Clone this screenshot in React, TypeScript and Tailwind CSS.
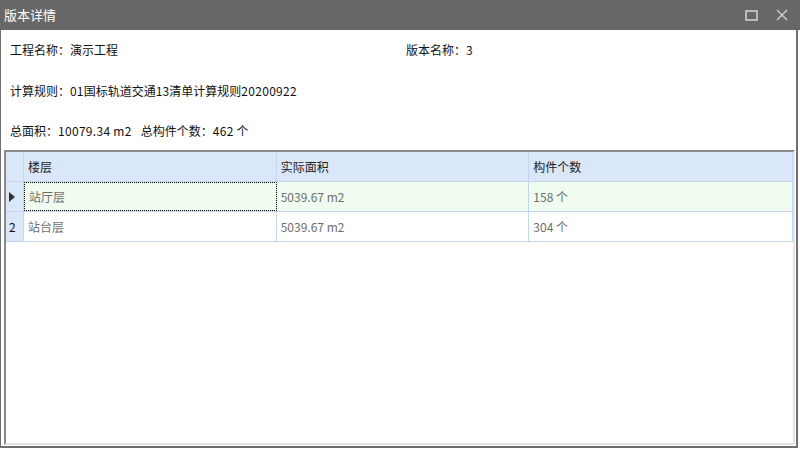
import React from "react";

const font = { fontFamily: '"Noto Sans CJK SC", "Microsoft YaHei", sans-serif' };

type Row = { no: string; floor: string; area: string; count: string };

const rows: Row[] = [
  { no: "", floor: "站厅层", area: "5039.67 m2", count: "158 个" },
  { no: "2", floor: "站台层", area: "5039.67 m2", count: "304 个" },
];

function TitleBar() {
  return (
    <div className="h-[30px] w-[800px] bg-[#676767] flex items-center justify-between">
      <span className="pl-[4px] text-[13px] text-white">版本详情</span>
      <div className="flex items-center gap-[18px] pr-[12px] text-[#d0d0d0]">
        <svg width="13" height="11" viewBox="0 0 13 11">
          <rect x="1" y="1" width="11" height="9" fill="none" stroke="currentColor" strokeWidth="1.6" />
        </svg>
        <svg width="12" height="12" viewBox="0 0 12 12">
          <path d="M1 1 L11 11 M11 1 L1 11" stroke="currentColor" strokeWidth="1.4" />
        </svg>
      </div>
    </div>
  );
}

function Grid() {
  return (
    <div className="ml-[3px] mr-[1px] flex-1 border-t-2 border-l-2 border-[#8a8a8a] border-r-2 border-r-[#e4e4e4] border-b-2 border-b-[#e4e4e4] bg-white text-[12px]">
      <div className="flex h-[30px] bg-[#dae7f9] border-b border-[#c3d6ef]">
        <div className="w-[18px] border-r border-[#c3d6ef]" />
        <div className="w-[253px] border-r border-[#c3d6ef] flex items-center pl-[4px] text-[#222]">楼层</div>
        <div className="w-[253px] border-r border-[#c3d6ef] flex items-center pl-[4px] text-[#222]">实际面积</div>
        <div className="w-[264px] border-r border-[#c3d6ef] flex items-center pl-[4px] text-[#222]">构件个数</div>
      </div>
      {rows.map((r, i) => (
        <div
          key={i}
          className={
            "flex h-[30px] border-b border-[#c3d6ef] " + (i === 0 ? "bg-[#effcef]" : "bg-white")
          }
        >
          <div className="w-[18px] bg-[#dae7f9] border-r border-[#c3d6ef] flex items-center pl-[3px] text-[#111]">
            {i === 0 ? (
              <svg width="6" height="10" viewBox="0 0 6 10">
                <path d="M0 0 L6 5 L0 10 Z" fill="#333" />
              </svg>
            ) : (
              r.no
            )}
          </div>
          <div
            className={
              "w-[253px] flex items-center pl-[4px] text-[#6e6e6e] " +
              (i === 0 ? "border border-dotted border-black" : "border-r border-[#c3d6ef]")
            }
          >
            {r.floor}
          </div>
          <div className="w-[253px] border-r border-[#c3d6ef] flex items-center pl-[4px] text-[#6e6e6e]">{r.area}</div>
          <div className="w-[264px] border-r border-[#c3d6ef] flex items-center pl-[4px] text-[#6e6e6e]">{r.count}</div>
        </div>
      ))}
    </div>
  );
}

export default function App() {
  return (
    <div className="w-[800px] h-[450px] bg-white" style={font}>
      <TitleBar />
      <div className="w-[798px] h-[418px] border-l border-r-2 border-b-2 border-[#6f6f6f] flex flex-col pb-[1px]">
        <div className="text-[12px] text-[#111]">
          <div className="h-[40px] flex items-center pl-[9px]">
            <span className="w-[396px]">工程名称：演示工程</span>
            <span>版本名称：3</span>
          </div>
          <div className="h-[41px] flex items-center pl-[9px]">
            计算规则：<span className="tracking-[0.15px]">01</span>国标轨道交通<span className="tracking-[0.15px]">13</span>清单计算规则<span className="tracking-[0.3px]">20200922</span>
          </div>
          <div className="h-[39px] flex items-center pl-[9px]">
            总面积：<span className="tracking-[0.3px]">10079.34 m2</span>
            <span className="w-[9px]" />
            总构件个数：<span className="tracking-[0.3px]">462 个</span>
          </div>
        </div>
        <Grid />
      </div>
    </div>
  );
}
